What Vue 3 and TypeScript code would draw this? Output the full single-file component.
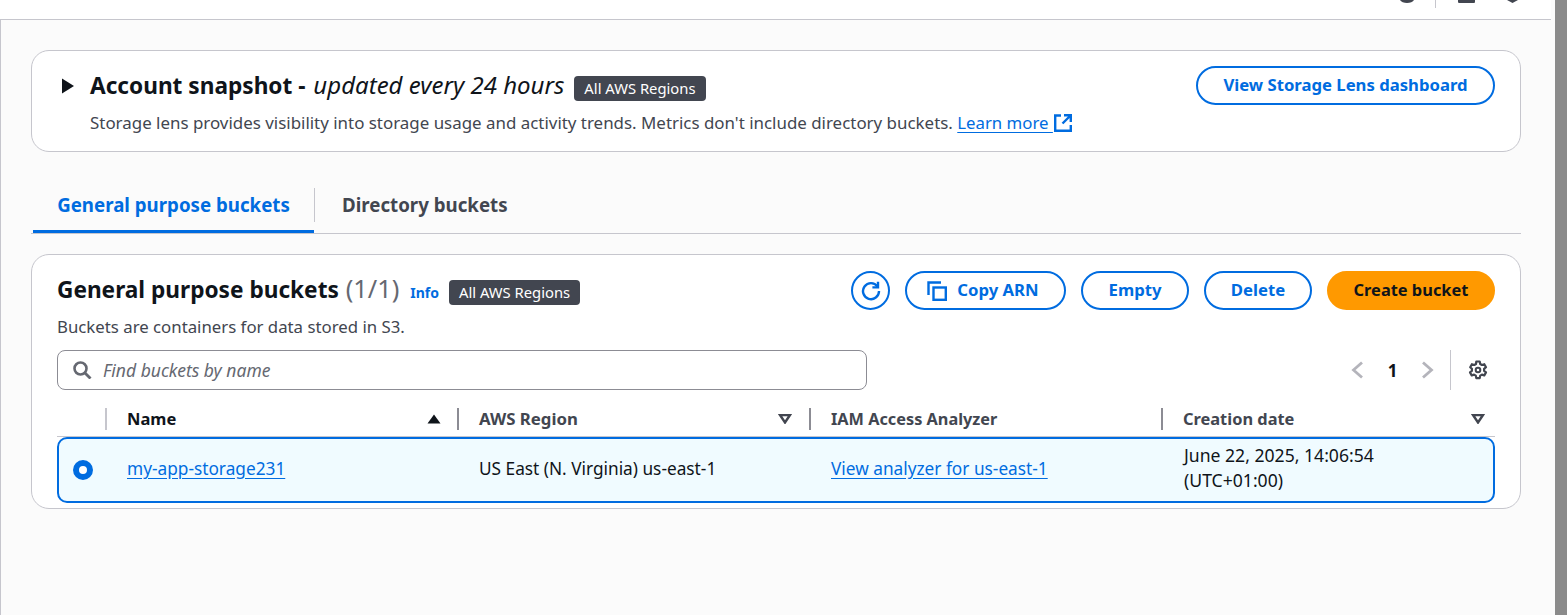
<script setup lang="ts">
interface Column { label: string; sort: 'asc' | 'none' | null; strong?: boolean }
const columns: Column[] = [
  { label: 'Name', sort: 'asc', strong: true },
  { label: 'AWS Region', sort: 'none' },
  { label: 'IAM Access Analyzer', sort: null },
  { label: 'Creation date', sort: 'none' },
]
</script>

<template>
  <div class="page">
    <div class="column">
      <header class="topbar">
        <svg class="top-icon" width="14" height="3" viewBox="0 0 14 3"><path d="M0 0h14c-1 2-4 3-7 3S1 2 0 0z" fill="#424650"/></svg>
        <span class="top-sep"></span>
        <svg class="top-icon" width="17" height="3" viewBox="0 0 17 3"><path d="M0 0h17v1.500c0 1-.5 1.500-1.500 1.500h-14C.5 3 0 2.500 0 1.500z" fill="#424650"/></svg>
        <svg class="top-icon last" width="11" height="3" viewBox="0 0 11 3"><path d="M0 0h11L5.500 3z" fill="#424650"/></svg>
      </header>
      <main class="main">
        <section class="card snapshot">
          <svg class="caret" width="14" height="16" viewBox="0 0 14 16"><path d="M0 .5l12 7.500-12 7.500z" fill="#0f141a"/></svg>
          <div class="snap-text">
            <div class="snap-title">
              <h2>Account snapshot - <em>updated every 24 hours</em></h2>
              <span class="badge">All AWS Regions</span>
            </div>
            <p class="snap-desc">Storage lens provides visibility into storage usage and activity trends. Metrics don't include directory buckets. <a class="link" href="#">Learn more&nbsp;</a><svg class="ext" width="18" height="18" viewBox="0 0 18 18"><path d="M7 1.500H1.200v15.300h15.600V11 M10 1.200h6.800V8 M16.500 1.500L8.500 9.500" fill="none" stroke="#006ce0" stroke-width="2.400"/></svg></p>
          </div>
          <button class="btn lens">View Storage Lens dashboard</button>
        </section>

        <nav class="tabs">
          <a class="tab active">General purpose buckets</a>
          <span class="tab-sep"></span>
          <a class="tab">Directory buckets</a>
        </nav>

        <section class="card buckets">
          <div class="head">
            <div class="head-text">
              <div class="head-title">
                <h2>General purpose buckets <span class="count">(1/1)</span></h2>
                <a class="info">Info</a>
                <span class="badge">All AWS Regions</span>
              </div>
              <p class="head-desc">Buckets are containers for data stored in S3.</p>
            </div>
            <div class="actions">
              <button class="btn round" aria-label="Refresh">
                <svg width="20" height="20" viewBox="0 0 20 20"><path d="M16.500 5.500A8 8 0 1 0 18 10" fill="none" stroke="#006ce0" stroke-width="2.400"/><path d="M17 .8v5.600h-5.600" fill="none" stroke="#006ce0" stroke-width="2.400"/></svg>
              </button>
              <button class="btn copy">
                <svg width="20" height="20" viewBox="0 0 20 20"><path d="M1.500 14V1.500H14" fill="none" stroke="#006ce0" stroke-width="2.400"/><rect x="6.500" y="6.500" width="12.300" height="12.300" fill="none" stroke="#006ce0" stroke-width="2.400"/></svg>
                Copy ARN
              </button>
              <button class="btn empty">Empty</button>
              <button class="btn delete">Delete</button>
              <button class="btn primary">Create bucket</button>
            </div>
          </div>

          <div class="tools">
            <label class="search">
              <svg width="19" height="18" viewBox="0 0 19 18"><circle cx="7.500" cy="7.500" r="6" fill="none" stroke="#656871" stroke-width="2.600"/><path d="M12 12l5.500 5.500" stroke="#656871" stroke-width="2.800"/></svg>
              <span class="placeholder">Find buckets by name</span>
            </label>
            <div class="pager">
              <svg width="14" height="18" viewBox="0 0 14 18"><path d="M12 1.500L3.500 9l8.500 7.500" fill="none" stroke="#b4b4bb" stroke-width="2.800"/></svg>
              <span class="page-no">1</span>
              <svg width="14" height="18" viewBox="0 0 14 18"><path d="M2 1.500L10.500 9 2 16.500" fill="none" stroke="#b4b4bb" stroke-width="2.800"/></svg>
              <span class="pager-sep"></span>
              <svg class="gear" width="20" height="20" viewBox="0 0 20 20"><path d="M8.300 1.500h3.400l.5 2.500 1.700 1 2.400-.8 1.700 3-1.900 1.600v2l1.900 1.600-1.700 3-2.400-.8-1.700 1-.5 2.500H8.300l-.5-2.500-1.700-1-2.400.8-1.700-3 1.900-1.600v-2L2.200 7.200l1.700-3 2.400.8 1.700-1z" fill="none" stroke="#424650" stroke-width="2.200" stroke-linejoin="round"/><circle cx="10" cy="10" r="2.300" fill="none" stroke="#424650" stroke-width="2"/></svg>
            </div>
          </div>

          <div class="thead">
            <div class="th"></div>
            <div v-for="c in columns" :key="c.label" class="th" :class="{ strong: c.strong }">
              <span>{{ c.label }}</span>
              <svg v-if="c.sort === 'asc'" width="14" height="10" viewBox="0 0 14 10"><path d="M7 .5l6.500 9H.5z" fill="#0f141a"/></svg>
              <svg v-else-if="c.sort === 'none'" width="14" height="10" viewBox="0 0 14 10"><path d="M2 1h10L7 8.500z" fill="none" stroke="#424650" stroke-width="2.400"/></svg>
            </div>
          </div>
          <div class="row">
            <div class="cell"><span class="radio"></span></div>
            <div class="cell"><a class="link" href="#">my-app-storage231</a></div>
            <div class="cell">US East (N. Virginia) us-east-1</div>
            <div class="cell"><a class="link" href="#">View analyzer for us-east-1</a></div>
            <div class="cell date"><span>June 22, 2025, 14:06:54<br>(UTC+01:00)</span></div>
          </div>
        </section>
      </main>
    </div>
    <div class="gutter"></div>
    <div class="scrollbar"></div>
  </div>
</template>

<style>
html, body { margin: 0; background: #fbfbfb; overflow: hidden; }
</style>

<style scoped>
* { box-sizing: border-box; }
.page { display: flex; width: 1567px; height: 615px; overflow: hidden; background: #fbfbfb; font-family: "Noto Sans", sans-serif; font-size: 16.920px; color: #0f141a; }
.column { width: 1551px; display: flex; flex-direction: column; }
.gutter { width: 4px; }
.scrollbar { width: 12px; background: #8b8b8b; }
.topbar { height: 20px; background: #fff; border-bottom: 1px solid #c6c6cd; display: flex; align-items: flex-start; padding-right: 33px; justify-content: flex-end; }
.top-sep { width: 1px; height: 8px; background: #c6c6cd; margin: 0 22px 0 21px; }
.top-icon.last { margin-left: 32px; }
.main { flex: 1; border-left: 1px solid #c6c6cd; padding: 30px 30px 0 30px; }
.card { background: #fff; border: 1px solid #c6c6cd; border-radius: 18px; }
.snapshot { height: 102px; display: flex; align-items: flex-start; padding: 14px 25px 0 30px; }
.caret { margin-top: 13px; margin-right: 14px; flex: none; }
.snap-text { flex: 1; }
.snap-title { display: flex; align-items: center; gap: 10px; height: 40px; }
.snap-title .badge { margin-top: 6px; }
h2 { margin: 0; font-size: 22.650px; font-weight: 700; white-space: nowrap; padding-bottom: 2px; }
em { font-weight: 400; font-style: italic; font-size: 24px; margin-left: 2px; }
.badge { background: #424650; color: #fff; font-size: 14.800px; border-radius: 4px; height: 25px; line-height: 25px; padding: 0 10px; white-space: nowrap; margin-top: 4px; }
.snap-desc { margin: 5px 0 0; color: #424650; white-space: nowrap; line-height: 26px; }
.link { color: #006ce0; text-decoration: underline; text-underline-offset: 3px; font-size: 16.800px; }
.ext { vertical-align: -3px; margin-left: 1px; }
.btn { font-family: inherit; font-weight: 700; font-size: 16.700px; color: #006ce0; background: #fff; border: 2px solid #006ce0; border-radius: 20px; height: 39px; display: inline-flex; align-items: center; justify-content: center; gap: 10px; padding: 0 0 2px; white-space: nowrap; }
.btn svg { margin-top: 2px; }
.lens { width: 299px; margin-top: 1px; }
.tabs { height: 51px; margin-top: 31px; display: flex; align-items: flex-start; border-bottom: 1px solid #c6c6cd; padding-left: 2px; }
.tab { height: 50px; line-height: 43px; font-weight: 700; font-size: 18.700px; color: #424650; }
.tab.active { width: 281px; text-align: center; color: #006ce0; border-bottom: 3px solid #006ce0; }
.tab-sep { width: 1px; height: 34px; margin-top: 5px; background: #c6c6cd; margin-right: 27px; }
.buckets { margin-top: 20px; height: 255px; padding: 16px 25px 0 25px; }
.head { display: flex; justify-content: space-between; align-items: flex-start; height: 79px; }
.head-title { display: flex; align-items: center; height: 38px; gap: 10px; }
.head-title h2 { padding-bottom: 4px; }
.count { font-weight: 400; color: #656871; font-size: 25.300px; margin-left: 1px; }
.info { color: #006ce0; font-weight: 700; font-size: 14px; margin-top: 4px; margin-left: 1px; }
.head-desc { margin: 7px 0 0; color: #424650; line-height: 22px; font-size: 16.800px; }
.actions { display: flex; gap: 15px; }
.round { width: 39px; }
.copy { width: 161px; padding-right: 5px; }
.empty { width: 108px; }
.delete { width: 108px; }
.primary { width: 168px; background: #ff9900; border-color: #ff9900; color: #0f141a; font-size: 16.400px; }
.tools { display: flex; justify-content: space-between; height: 40px; }
.search { width: 810px; height: 40px; border: 1px solid #8c8c94; border-radius: 8px; display: flex; align-items: center; gap: 11px; padding-left: 15px; background: #fff; }
.placeholder { font-style: italic; color: #656871; font-size: 17.500px; }
.pager { display: flex; align-items: center; height: 40px; margin-right: 7px; }
.page-no { font-weight: 700; width: 57px; text-align: center; }
.pager-sep { width: 1px; height: 40px; background: #c6c6cd; margin: 0 17px 0 15px; }
.thead { display: grid; grid-template-columns: 48px 352px 352px 352px 334px; height: 47px; padding-top: 13px; border-bottom: 1px solid #c6c6cd; }
.th { display: flex; align-items: center; justify-content: space-between; height: 31px; padding: 0 17px 0 22px; font-weight: 700; color: #424650; position: relative; font-size: 16.500px; }
.th.strong { color: #0f141a; padding-right: 16px; }
.th:nth-child(3) { font-size: 16.800px; }
.th:nth-child(4) { font-size: 16.300px; }
.th:nth-child(5) { font-size: 16.400px; }
.th:last-child { padding-right: 10px; }
.th:not(:first-child)::before { content: ""; position: absolute; left: 0; top: 5px; bottom: 4px; width: 2px; background: #8c8c94; }
.th.strong::before { background: #c6c6cd !important; }
.row { display: grid; grid-template-columns: 49px 352px 352px 351px 334px; height: 66px; border: 2px solid #006ce0; border-radius: 10px; background: #f0fbff; font-size: 17.250px; }
.row .link { font-size: 17.250px; }
.cell { display: flex; align-items: center; padding: 0 0 3px 19px; }
.cell:first-child { padding-bottom: 0; }
.date { line-height: 25px; padding-left: 21px; padding-bottom: 5px; font-size: 17.600px; }
.radio { width: 20px; height: 20px; border-radius: 50%; background: #fff; border: 6px solid #006ce0; margin-left: -5px; flex: none; }
</style>
